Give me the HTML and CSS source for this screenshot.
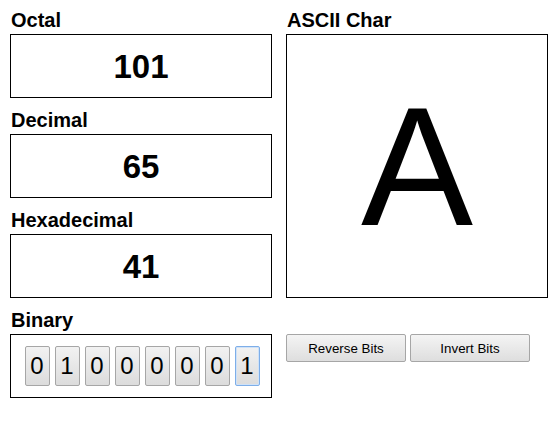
FILE: index.html
```html
<!DOCTYPE html>
<html>
<head>
<meta charset="utf-8">
<link rel="stylesheet" href="styles.css">
</head>
<body>
<div class="page">
  <div class="col left">
    <div class="section">
      <div class="label">Octal</div>
      <div class="box num">101</div>
    </div>
    <div class="section">
      <div class="label">Decimal</div>
      <div class="box num">65</div>
    </div>
    <div class="section">
      <div class="label">Hexadecimal</div>
      <div class="box num">41</div>
    </div>
    <div class="section">
      <div class="label">Binary</div>
      <div class="box bits">
        <button class="bit">0</button>
        <button class="bit">1</button>
        <button class="bit">0</button>
        <button class="bit">0</button>
        <button class="bit">0</button>
        <button class="bit">0</button>
        <button class="bit">0</button>
        <button class="bit focus">1</button>
      </div>
    </div>
  </div>
  <div class="col right">
    <div class="section">
      <div class="label">ASCII Char</div>
      <div class="charbox">A</div>
    </div>
    <div class="actions">
      <button class="btn">Reverse Bits</button>
      <button class="btn">Invert Bits</button>
    </div>
  </div>
</div>
</body>
</html>
```
FILE: styles.css
```css
html, body {
  margin: 0;
  padding: 0;
  background: #ffffff;
}
body {
  font-family: "Liberation Sans", Arial, sans-serif;
  color: #000;
}
.page {
  display: flex;
  gap: 14px;
  padding: 9px 0 0 10px;
}
.col {
  display: flex;
  flex-direction: column;
  width: 262px;
}
.section {
  display: flex;
  flex-direction: column;
}
.left .section {
  margin-bottom: 11px;
}
.label {
  font-size: 20px;
  font-weight: bold;
  line-height: 23px;
  height: 23px;
  margin-bottom: 2px;
  padding-left: 1px;
}
.box {
  box-sizing: border-box;
  height: 64px;
  border: 1px solid #000;
  display: flex;
  align-items: center;
  justify-content: center;
}
.num {
  font-size: 33px;
  font-weight: bold;
  line-height: 1;
}
.bits {
  gap: 5px;
  padding-left: 2px;
}
.bit {
  box-sizing: border-box;
  width: 25px;
  height: 40px;
  padding: 0;
  margin: 0;
  border: 1px solid #a6a6a6;
  border-radius: 2px;
  background: linear-gradient(#f2f2f2, #dcdcdc);
  font-family: "Liberation Sans", Arial, sans-serif;
  font-size: 24px;
  color: #000;
  line-height: 38px;
}
.bit.focus {
  border: 1px solid #7eaee8;
  box-shadow: inset 0 0 0 1px #cfe2f8;
}
.charbox {
  box-sizing: border-box;
  height: 264px;
  border: 1px solid #000;
  display: flex;
  align-items: center;
  justify-content: center;
  font-size: 168px;
  line-height: 1;
  padding-top: 2px;
}
.actions {
  display: flex;
  gap: 4px;
  margin-top: 36px;
}
.btn {
  box-sizing: border-box;
  width: 120px;
  height: 28px;
  margin: 0;
  padding: 0;
  border: 1px solid #a6a6a6;
  border-radius: 2px;
  background: linear-gradient(#f4f4f4, #dedede);
  font-family: "Liberation Sans", Arial, sans-serif;
  font-size: 13.33px;
  color: #000;
}
```
